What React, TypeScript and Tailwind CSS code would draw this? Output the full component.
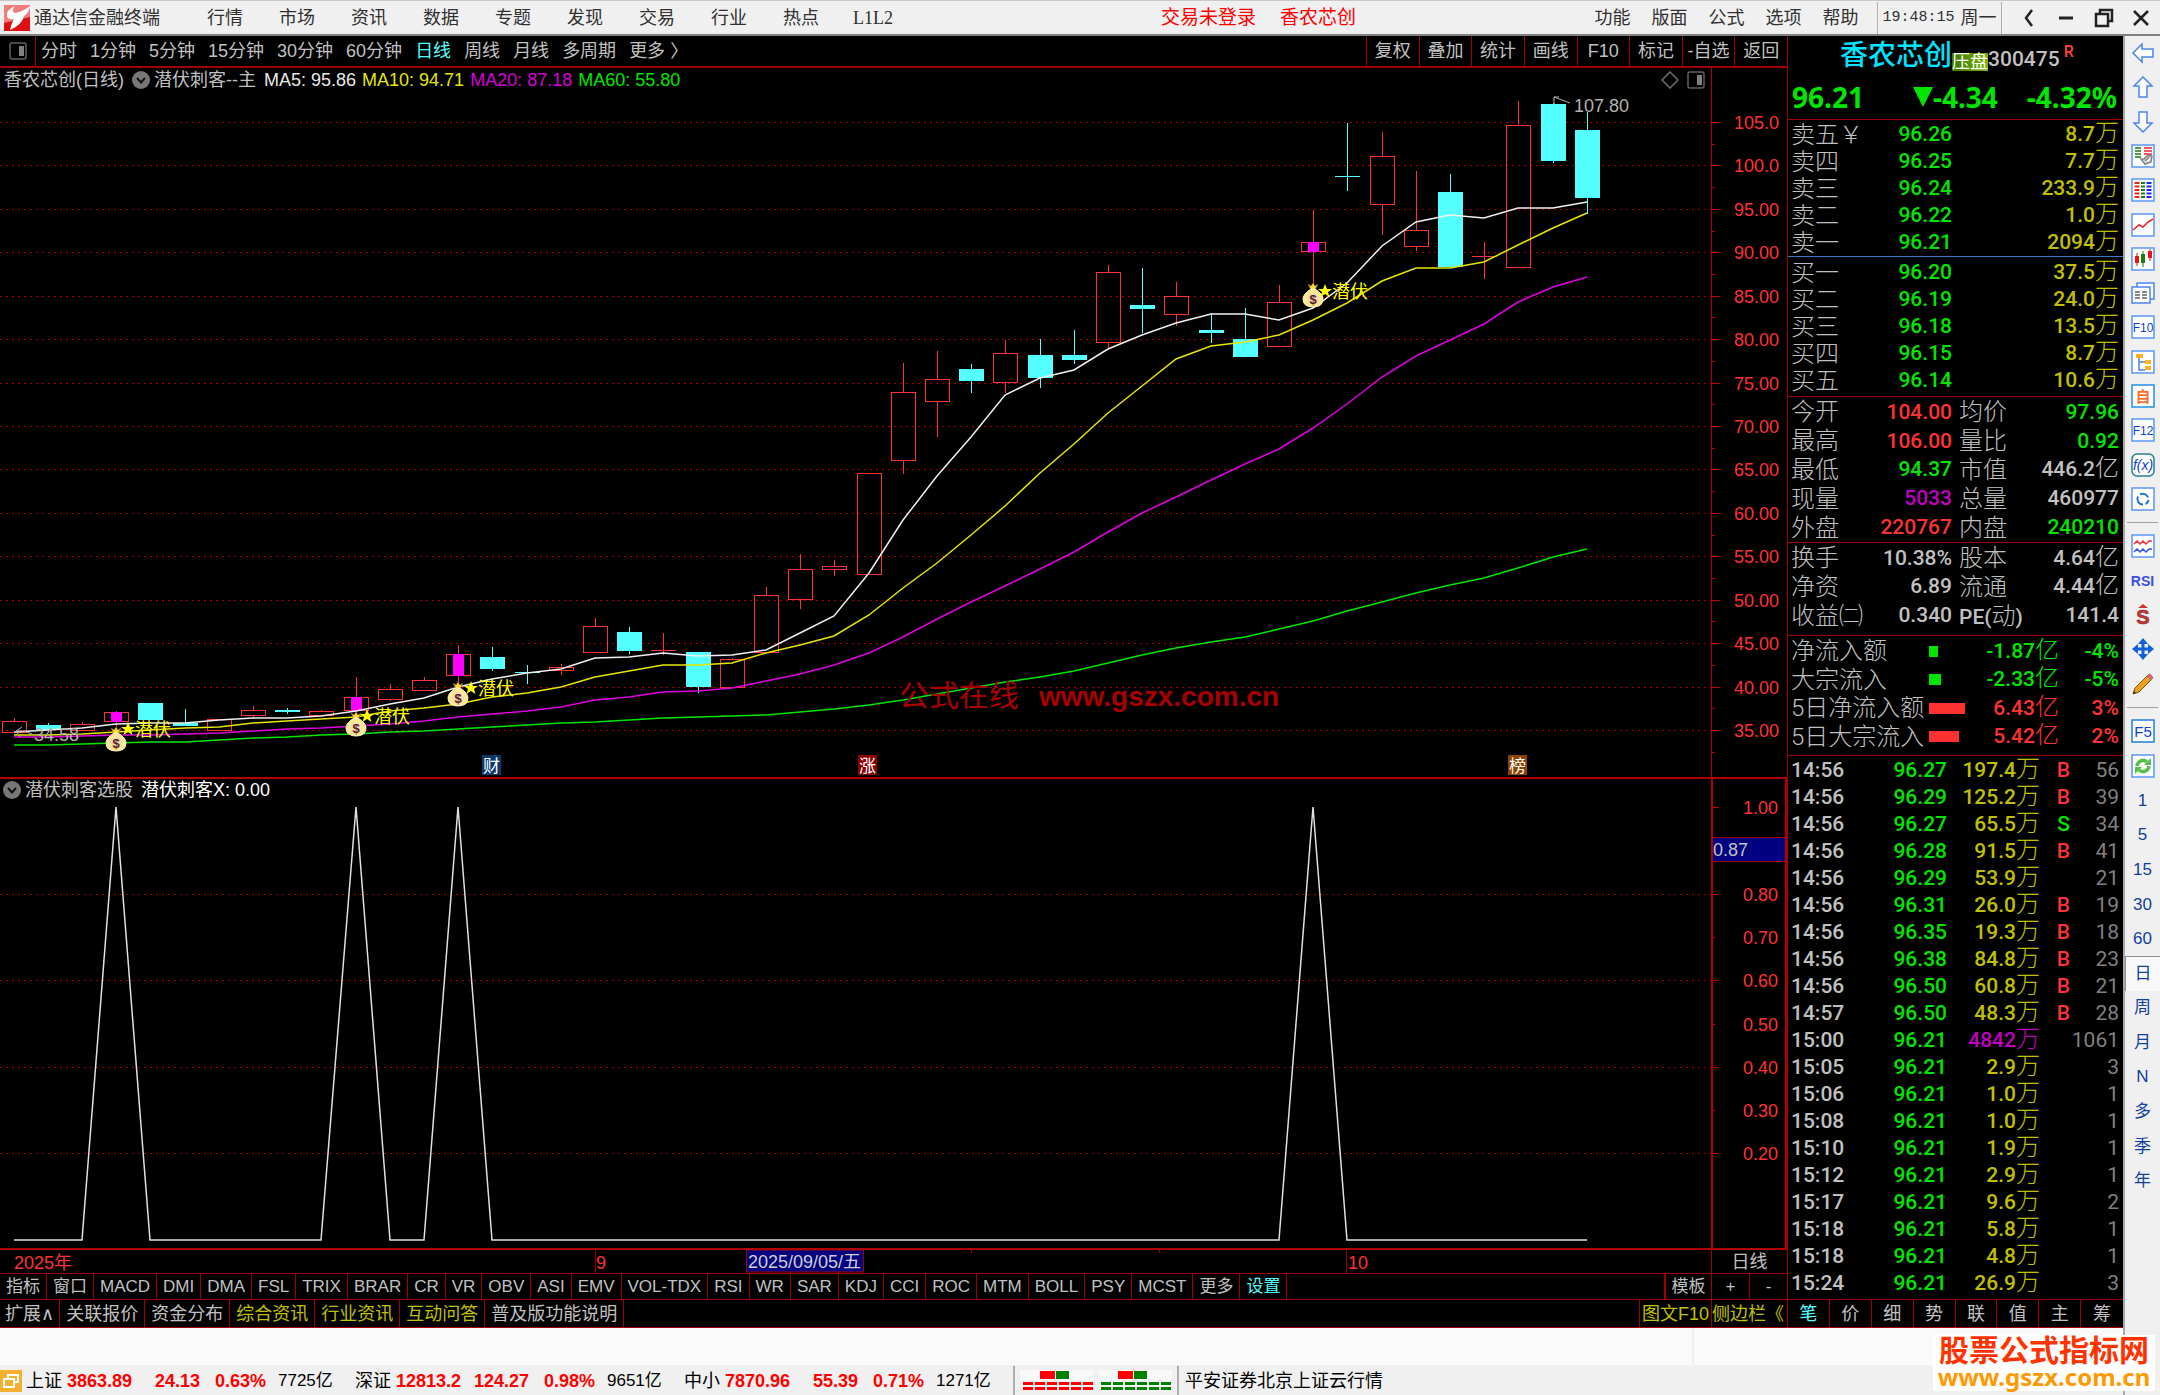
import React from "react";
import clsx from "clsx";

// ─── Data ────────────────────────────────────────────────────

const MENU = ["行情", "市场", "资讯", "数据", "专题", "发现", "交易", "行业", "热点", "L1L2"];
const MENU_RIGHT = ["功能", "版面", "公式", "选项", "帮助"];
const PERIODS = ["分时", "1分钟", "5分钟", "15分钟", "30分钟", "60分钟", "日线", "周线", "月线", "多周期", "更多 〉"];
const TOOLS = ["复权", "叠加", "统计", "画线", "F10", "标记", "-自选", "返回"];
const INDICATORS = [
  "指标", "窗口", "MACD", "DMI", "DMA", "FSL", "TRIX", "BRAR", "CR", "VR", "OBV", "ASI", "EMV", "VOL-TDX",
  "RSI", "WR", "SAR", "KDJ", "CCI", "ROC", "MTM", "BOLL", "PSY", "MCST", "更多", "设置",
];
const NEWS = ["扩展∧", "关联报价", "资金分布", "综合资讯", "行业资讯", "互动问答", "普及版功能说明"];
const QUOTE_TABS = ["笔", "价", "细", "势", "联", "值", "主", "筹"];

const SELL = [
  ["卖五￥", "96.26", "8.7万"],
  ["卖四", "96.25", "7.7万"],
  ["卖三", "96.24", "233.9万"],
  ["卖二", "96.22", "1.0万"],
  ["卖一", "96.21", "2094万"],
];
const BUY = [
  ["买一", "96.20", "37.5万"],
  ["买二", "96.19", "24.0万"],
  ["买三", "96.18", "13.5万"],
  ["买四", "96.15", "8.7万"],
  ["买五", "96.14", "10.6万"],
];

const RED = "text-[#ff3232]";
const GREEN = "text-[#00e600]";
const GREY = "text-[#c0c0c0]";
const PURPLE = "text-[#c000c0]";

const STATS = [
  ["今开", "104.00", RED, "均价", "97.96", GREEN],
  ["最高", "106.00", RED, "量比", "0.92", GREEN],
  ["最低", "94.37", GREEN, "市值", "446.2亿", GREY],
  ["现量", "5033", PURPLE, "总量", "460977", GREY],
  ["外盘", "220767", RED, "内盘", "240210", GREEN],
];
const BASICS = [
  ["换手", "10.38%", GREY, "股本", "4.64亿", GREY],
  ["净资", "6.89", GREY, "流通", "4.44亿", GREY],
  ["收益㈡", "0.340", GREY, "PE(动)", "141.4", GREY],
];
const FLOWS = [
  { label: "净流入额", bar: 9, value: "-1.87亿", pct: "-4%", up: false },
  { label: "大宗流入", bar: 12, value: "-2.33亿", pct: "-5%", up: false },
  { label: "5日净流入额", bar: 36, value: "6.43亿", pct: "3%", up: true },
  { label: "5日大宗流入", bar: 30, value: "5.42亿", pct: "2%", up: true },
];
const TICKS = [
  ["14:56", "96.27", "197.4万", "B", "56"],
  ["14:56", "96.29", "125.2万", "B", "39"],
  ["14:56", "96.27", "65.5万", "S", "34"],
  ["14:56", "96.28", "91.5万", "B", "41"],
  ["14:56", "96.29", "53.9万", "", "21"],
  ["14:56", "96.31", "26.0万", "B", "19"],
  ["14:56", "96.35", "19.3万", "B", "18"],
  ["14:56", "96.38", "84.8万", "B", "23"],
  ["14:56", "96.50", "60.8万", "B", "21"],
  ["14:57", "96.50", "48.3万", "B", "28"],
  ["15:00", "96.21", "4842万", "", "1061"],
  ["15:05", "96.21", "2.9万", "", "3"],
  ["15:06", "96.21", "1.0万", "", "1"],
  ["15:08", "96.21", "1.0万", "", "1"],
  ["15:10", "96.21", "1.9万", "", "1"],
  ["15:12", "96.21", "2.9万", "", "1"],
  ["15:17", "96.21", "9.6万", "", "2"],
  ["15:18", "96.21", "5.8万", "", "1"],
  ["15:18", "96.21", "4.8万", "", "1"],
  ["15:24", "96.21", "26.9万", "", "3"],
];

const INDEXES = [
  { name: "上证", last: "3863.89", chg: "24.13", pct: "0.63%", amt: "7725亿" },
  { name: "深证", last: "12813.2", chg: "124.27", pct: "0.98%", amt: "9651亿" },
  { name: "中小", last: "7870.96", chg: "55.39", pct: "0.71%", amt: "1271亿" },
];

// r = up (hollow red), c = down (cyan), m = up with signal; then high, top, bottom, low
type Candle = ["r" | "c" | "m", number, number, number, number];
const CANDLES: Candle[] = [
  ["r", 718, 721, 732, 732], ["c", 723, 725, 730, 730], ["r", 722, 724, 730, 730], ["m", 711, 712, 721, 727],
  ["c", 703, 703, 720, 720], ["c", 709, 723, 726, 726], ["r", 719, 719, 730, 730], ["r", 706, 710, 715, 719],
  ["c", 708, 710, 712, 714], ["r", 710, 711, 715, 717], ["m", 677, 697, 710, 713], ["r", 684, 689, 699, 701],
  ["r", 677, 680, 690, 690], ["m", 645, 654, 675, 683], ["c", 647, 657, 669, 671], ["c", 665, 672, 673, 684],
  ["r", 664, 667, 670, 675], ["r", 618, 626, 652, 652], ["c", 627, 632, 651, 654], ["r", 633, 650, 650, 655],
  ["c", 652, 652, 687, 693], ["r", 658, 659, 687, 687], ["r", 587, 595, 652, 652], ["r", 554, 569, 599, 609],
  ["r", 560, 566, 569, 576], ["r", 473, 473, 574, 574], ["r", 363, 392, 460, 474], ["r", 351, 379, 401, 437],
  ["c", 364, 369, 381, 393], ["r", 340, 353, 382, 393], ["c", 339, 355, 378, 388], ["c", 330, 355, 360, 364],
  ["r", 265, 272, 342, 349], ["c", 268, 305, 309, 333], ["r", 282, 296, 314, 326], ["c", 313, 330, 333, 343],
  ["c", 308, 339, 357, 357], ["r", 285, 302, 346, 346], ["m", 210, 242, 251, 285], ["c", 123, 176, 177, 191],
  ["r", 132, 156, 204, 235], ["r", 171, 230, 246, 251], ["c", 174, 192, 267, 267], ["r", 242, 256, 256, 279],
  ["r", 101, 125, 267, 267], ["c", 103, 104, 161, 163], ["c", 112, 130, 198, 214],
];

const MA5 = [
  732, 730, 728, 724, 723, 723, 720, 718, 718, 716, 711, 704, 698, 687, 679, 673, 669, 658, 657, 653, 656, 655, 650,
  633, 616, 573, 520, 476, 437, 395, 378, 370, 349, 335, 323, 314, 314, 320, 308, 283, 246, 222, 215, 218, 208, 208, 202,
];
const MA10 = [
  735, 735, 734, 732, 730, 728, 727, 723, 721, 719, 717, 711, 708, 704, 697, 693, 687, 677, 671, 665, 665, 663, 653,
  645, 636, 615, 588, 563, 535, 506, 473, 444, 413, 386, 359, 346, 342, 335, 320, 303, 281, 268, 268, 262, 245, 228, 213,
];
const MA20 = [
  737, 737, 736, 735, 735, 734, 733, 731, 729, 728, 726, 724, 721, 717, 714, 711, 707, 700, 697, 692, 691, 688, 681,
  674, 665, 653, 637, 619, 602, 586, 569, 552, 532, 513, 497, 480, 464, 449, 428, 404, 377, 356, 340, 324, 302, 287, 277,
];
const MA60 = [
  745, 745, 744, 743, 742, 742, 740, 738, 737, 735, 734, 732, 731, 729, 727, 725, 723, 722, 720, 718, 717, 716, 715,
  712, 709, 705, 700, 694, 688, 682, 677, 671, 663, 655, 648, 642, 637, 629, 621, 611, 602, 593, 585, 578, 568, 557, 549,
];

const SIGNALS = [
  { i: 3, y: 740, tx: 135, ty: 729 },
  { i: 10, y: 725, tx: 374, ty: 716 },
  { i: 13, y: 695, tx: 478, ty: 688 },
  { i: 38, y: 296, tx: 1332, ty: 291 },
];

const BADGES = [
  { text: "财", x: 482, fill: "#08386e" },
  { text: "涨", x: 858, fill: "#8c0000" },
  { text: "榜", x: 1508, fill: "#8a4300" },
];

// ─── Helpers ─────────────────────────────────────────────────

const candleX = (i: number) => Math.floor(14 + i * 34.2);
const priceY = (p: number) => Math.round(122 + (105 - p) * 8.686);
const subY = (v: number) => Math.round(1240 - v * 433);
const linePoints = (ys: number[]) => ys.map((y, i) => `${candleX(i)},${y}`).join(" ");

const PRICES = Array.from({ length: 15 }, (_, i) => 105 - i * 5);
const SUB_VALUES = [1, 0.8, 0.7, 0.6, 0.5, 0.4, 0.3, 0.2];

function FoldIcon() {
  return (
    <svg className="size-[18px] shrink-0" viewBox="0 0 18 18">
      <circle cx="9" cy="9" r="9" fill="#777" />
      <path d="M5 7l4 4.5L13 7" fill="none" stroke="#111" strokeWidth="2" />
    </svg>
  );
}

function PanelIcon() {
  return (
    <svg className="size-[18px]" viewBox="0 0 18 18">
      <rect x="1" y="1" width="16" height="16" rx="2" fill="none" stroke="#606060" strokeWidth="1.500" />
      <rect x="10" y="4" width="5" height="10" fill="#808080" />
    </svg>
  );
}

// ─── Charts ──────────────────────────────────────────────────

function MoneyBag({ x, y }: { x: number; y: number }) {
  return (
    <g transform={`translate(${x} ${y})`}>
      <path d="M-5 -12L-2 -10L0 -13L2 -10L5 -12L2 -6H-2Z" fill="#ffd83a" stroke="#8a6210" strokeWidth="0.6" />
      <path d="M-2 -7H2Q10 -2 10 3Q10 11 0 11Q-10 11 -10 3Q-10 -2 -2 -7Z" fill="#ffe98a" stroke="#fff6d0" />
      <circle cx="0" cy="3" r="6" fill="#f3dcc0" />
      <text x="0" y="8" textAnchor="middle" fontSize="13" fontWeight="700" fill="#5c1f10">
        $
      </text>
    </g>
  );
}

function CandleShape({ candle, x }: { candle: Candle; x: number }) {
  const [kind, high, top, bottom, low] = candle;
  if (kind === "c") {
    return (
      <g fill="#54ffff">
        <rect x={x - 12} y={top} width="25" height={Math.max(bottom - top, 1)} />
        <rect x={x} y={high} width="1" height={low - high} />
      </g>
    );
  }
  return (
    <g>
      <g fill="#ff3232">
        <rect x={x} y={high} width="1" height={top - high} />
        <rect x={x} y={bottom} width="1" height={low - bottom} />
        {top === bottom && <rect x={x - 12} y={top} width="25" height="1" />}
      </g>
      {top !== bottom && (
        <rect x={x - 12 + 0.5} y={top + 0.5} width="24" height={bottom - top} fill="none" stroke="#ff3232" />
      )}
      {kind === "m" && <rect x={x - 5} y={top} width="11" height={bottom - top + 1} fill="#ff00ff" />}
    </g>
  );
}

function MainChart() {
  return (
    <svg className="block w-full" viewBox="0 92 1711 685" fontFamily="'Liberation Sans','Noto Sans CJK SC',sans-serif" fontSize="18">
      {PRICES.map((p) => (
        <line key={p} x1="0" x2="1711" y1={priceY(p) + 0.5} y2={priceY(p) + 0.5} stroke="#a00000" strokeDasharray="2 4" />
      ))}
      <g shapeRendering="crispEdges">
        {CANDLES.map((c, i) => (
          <CandleShape key={i} candle={c} x={candleX(i)} />
        ))}
      </g>
      <g fill="none" strokeWidth="1.5">
        <polyline points={linePoints(MA60)} stroke="#00e600" />
        <polyline points={linePoints(MA20)} stroke="#e000e0" />
        <polyline points={linePoints(MA10)} stroke="#e6e600" />
        <polyline points={linePoints(MA5)} stroke="#f0f0f0" />
      </g>
      <g fill="#b0b0b0">
        <text x="34" y="741">34.58</text>
        <path d="M16 731h8M16 731l4 6M16 731l6-4M24 731l8 3" stroke="#b0b0b0" fill="none" />
        <text x="1574" y="112">107.80</text>
        <path d="M1554 104v-7h5M1554 97l16 6" stroke="#b0b0b0" fill="none" />
      </g>
      {SIGNALS.map((s) => (
        <g key={s.i}>
          <MoneyBag x={candleX(s.i)} y={s.y} />
          <path
            transform={`translate(${s.tx - 7} ${s.ty})`}
            d="M0 -7L2 -2H7L3 1L4.500 6L0 3L-4.500 6L-3 1L-7 -2H-2Z"
            fill="#ffff00"
          />
          <text x={s.tx} y={s.ty + 7} fill="#ffff00">
            潜伏
          </text>
        </g>
      ))}
      {BADGES.map((b) => (
        <g key={b.text}>
          <rect x={b.x} y="755" width="19" height="20" fill={b.fill} />
          <text x={b.x + 1} y="772" fontSize="17" fill="#fff">
            {b.text}
          </text>
        </g>
      ))}
      <g fill="#a80000">
        <text x="899" y="706" fontSize="30">
          公式在线
        </text>
        <text x="1039" y="706" fontSize="28" fontWeight="700">
          www.gszx.com.cn
        </text>
      </g>
    </svg>
  );
}

function PriceAxis() {
  return (
    <svg className="block w-full" viewBox="0 68 75 709" fontFamily="'Liberation Sans',sans-serif" fontSize="18">
      {PRICES.map((p) => (
        <g key={p}>
          <path d={`M0 ${priceY(p) + 0.5}h8M0 ${priceY(p - 2.5) + 0.5}h3`} stroke="#c00000" />
          <text x="67" y={priceY(p) + 7} textAnchor="end" fill="#ff3232">
            {p >= 100 ? p.toFixed(1) : p.toFixed(2)}
          </text>
        </g>
      ))}
    </svg>
  );
}

function SubChart() {
  const peaks = SIGNALS.map((s) => s.i);
  const points = CANDLES.map((_, i) => `${candleX(i)},${subY(peaks.includes(i) ? 1 : 0)}`).join(" ");
  return (
    <svg className="block w-full" viewBox="0 801 1711 447">
      {[0.8, 0.6, 0.4, 0.2].map((v) => (
        <line key={v} x1="0" x2="1711" y1={subY(v) + 0.5} y2={subY(v) + 0.5} stroke="#a00000" strokeDasharray="2 4" />
      ))}
      <polyline points={points} fill="none" stroke="#e0e0e0" strokeWidth="1.5" />
    </svg>
  );
}

function SubAxis() {
  return (
    <svg className="block w-full" viewBox="0 779 72 468" fontFamily="'Liberation Sans',sans-serif" fontSize="18">
      {SUB_VALUES.map((v) => (
        <g key={v}>
          <path d={`M0 ${subY(v) + 0.5}h${Math.round(v * 10) % 2 ? 2 : 6}`} stroke="#c00000" />
          <text x="65" y={subY(v) + 7} textAnchor="end" fill="#ff3232">
            {v.toFixed(2)}
          </text>
        </g>
      ))}
      <rect x="-2" y="837.5" width="76" height="24" fill="#000080" stroke="#a00000" />
      <text x="0" y="856" fill="#c0c0c0">
        0.87
      </text>
    </svg>
  );
}

function DateAxis() {
  return (
    <svg className="block w-full" viewBox="0 1250 1711 23" fontFamily="'Liberation Sans','Noto Sans CJK SC',sans-serif" fontSize="18">
      <path d="M595.500 1250v23M1346.500 1250v23M971.500 1250v3M1159.500 1250v3" stroke="#a00000" />
      <g fill="#ff3232">
        <text x="14" y="1269">2025年</text>
        <text x="596" y="1269">9</text>
        <text x="1348" y="1269">10</text>
      </g>
      <rect x="746.500" y="1250" width="117" height="22" fill="#000080" stroke="#a00000" />
      <text x="748" y="1268" fill="#d0d0d0">
        2025/09/05/五
      </text>
    </svg>
  );
}

// ─── Quote panel ─────────────────────────────────────────────

/** Number followed by an optional 万 / 亿 unit in the larger thin face */
function Num({ value }: { value: string }) {
  const m = value.match(/^(.*?)([万亿]?)$/)!;
  return (
    <>
      {m[1]}
      {m[2] && <span className="text-2xl leading-[0] font-light">{m[2]}</span>}
    </>
  );
}

function BookTable({ rows, label }: { rows: string[][]; label: string }) {
  return (
    <table aria-label={label} className="h-[135px] w-full table-fixed leading-none">
      <tbody>
        {rows.map(([name, price, vol]) => (
          <tr key={name}>
            <th className="w-[84px] p-0 text-left text-2xl leading-none font-light whitespace-nowrap">{name}</th>
            <td className="w-[77px] p-0 text-right text-[#00e600]">{price}</td>
            <td className="p-0 text-right text-[#c0c000]">
              <Num value={vol} />
            </td>
          </tr>
        ))}
      </tbody>
    </table>
  );
}

function StatTable({ rows, label, className }: { rows: string[][]; label: string; className: string }) {
  return (
    <table aria-label={label} className={clsx("w-full table-fixed leading-none whitespace-nowrap", className)}>
      <tbody>
        {rows.map(([a, av, ac, b, bv, bc]) => (
          <tr key={a}>
            <th className="w-[72px] p-0 text-left text-2xl leading-none font-light">{a}</th>
            <td className={clsx("w-[89px] p-0 text-right", ac)}>{av}</td>
            <th className="w-[72px] p-0 pl-[7px] text-left text-2xl leading-none font-light">
              {b === "PE(动)" ? (
                <>
                  <span className="text-[21px] font-medium">PE(</span>动<span className="text-[21px] font-medium">)</span>
                </>
              ) : (
                b
              )}
            </th>
            <td className={clsx("p-0 text-right", bc)}>
              <Num value={bv} />
            </td>
          </tr>
        ))}
      </tbody>
    </table>
  );
}

function QuotePanel() {
  return (
    <aside className="flex w-[336px] shrink-0 flex-col border-l border-[#a00000] font-[Roboto,'Noto_Sans_CJK_SC',sans-serif] text-[21px] leading-none font-medium text-[#c0c0c0]">
      <div className="flex h-[84px] flex-col border-b border-[#a00000]">
        <div className="flex h-10 items-center pl-[52px]">
          <h1 className="text-[28px] font-medium text-[#00e5ff]">香农芯创</h1>
          <span className="mt-3 bg-linear-to-r from-[#3c7800] to-[#78b400] text-lg leading-[18px] font-normal text-white">压盘</span>
          <span className="mt-2">300475</span>
          <span className="mb-2 pl-1 text-base text-[#ff4040]">R</span>
        </div>
        <div className="flex h-11 items-center justify-between pr-1.5 pl-1 font-['Noto_Sans',sans-serif] text-[28px] font-bold text-[#00e600]">
          <span>96.21</span>
          <span className="flex items-center pl-5">
            <svg className="h-5 w-5" viewBox="0 0 20 20">
              <path d="M0 0H20L10 20Z" fill="#00e600" />
            </svg>
            -4.34
          </span>
          <span>-4.32%</span>
        </div>
      </div>

      <div className="border-b border-[#3878c8] pt-px pr-1 pl-[3px]">
        <BookTable rows={SELL} label="卖盘" />
      </div>
      <div className="border-b border-[#a00000] pt-0.5 pr-1 pb-0.5 pl-[3px]">
        <BookTable rows={BUY} label="买盘" />
      </div>
      <div className="border-b border-[#a00000] pt-px pr-1 pl-[3px]">
        <StatTable rows={STATS} label="行情" className="h-[144px]" />
      </div>
      <div className="border-b border-[#a00000] pt-px pr-1 pb-[5px] pl-[3px]">
        <StatTable rows={BASICS} label="基本面" className="h-[86px]" />
      </div>
      <div className="border-b border-[#a00000] pt-px pr-1 pb-1 pl-[3px]">
        <table aria-label="资金流向" className="h-[114px] w-full table-fixed leading-none whitespace-nowrap">
          <tbody>
            {FLOWS.map((f) => (
              <tr key={f.label} className={f.up ? "text-[#ff3232]" : "text-[#00e600]"}>
                <th className="w-[138px] p-0 text-left text-2xl leading-none font-light text-[#c0c0c0]">{f.label}</th>
                <td className="w-[42px] p-0">
                  <div className="h-[11px] bg-current" style={{ width: f.bar }} />
                </td>
                <td className="w-[88px] p-0 text-right">
                  <Num value={f.value} />
                </td>
                <td className="p-0 text-right">{f.pct}</td>
              </tr>
            ))}
          </tbody>
        </table>
      </div>
      <div className="flex-1 pt-px pr-1 pb-0.5 pl-[3px]">
        <table aria-label="分笔成交" className="h-[540px] w-full table-fixed leading-none whitespace-nowrap">
          <tbody>
            {TICKS.map(([time, price, vol, side, n], i) => (
              <tr key={i}>
                <td className="w-[70px] p-0">{time}</td>
                <td className="w-[86px] p-0 text-right text-[#00e600]">{price}</td>
                <td className={clsx("w-[93px] p-0 text-right", vol === "4842万" ? "text-[#c000c0]" : "text-[#c0c000]")}>
                  <Num value={vol} />
                </td>
                <td className={clsx("w-[30px] p-0 text-right", side === "S" ? GREEN : RED)}>{side}</td>
                <td className="p-0 text-right font-normal text-[#808080]">{n}</td>
              </tr>
            ))}
          </tbody>
        </table>
      </div>
      <div className="grid h-[29px] grid-cols-8 border-y border-[#a00000] text-lg font-normal">
        {QUOTE_TABS.map((t) => (
          <button key={t} className={clsx("border-[#a00000] not-last:border-r", t === "笔" && "text-[#54ffff]")}>
            {t}
          </button>
        ))}
      </div>
    </aside>
  );
}

// ─── Right icon bar ──────────────────────────────────────────

function Icon({ children, box = "#5b96f5" }: { children: React.ReactNode; box?: string }) {
  return (
    <svg className="size-6" viewBox="0 0 24 24" fontFamily="'Liberation Sans','Noto Sans CJK SC',sans-serif">
      {box !== "none" && <rect x="1" y="1" width="22" height="22" fill="#fff" stroke={box} strokeWidth="1.500" />}
      {children}
    </svg>
  );
}

const ARROW = "M2 12L11 3V8H22V16H11V21Z";

const GROUP_ONE: [string, React.ReactNode][] = [
  ["后退", <Icon box="none"><path d={ARROW} fill="#fff" stroke="#4b84e8" strokeWidth="1.500" /></Icon>],
  ["上翻", <Icon box="none"><path d={ARROW} transform="rotate(90 12 12)" fill="#fff" stroke="#4b84e8" strokeWidth="1.500" /></Icon>],
  ["下翻", <Icon box="none"><path d={ARROW} transform="rotate(-90 12 12)" fill="#fff" stroke="#4b84e8" strokeWidth="1.500" /></Icon>],
  ["报价", (
    <Icon>
      <path d="M4 4h6M4 7h6M4 10h6M4 13h6" stroke="#108010" strokeWidth="1.500" />
      <path d="M13 4h8M13 7h8M13 10h8" stroke="#f02020" strokeWidth="1.500" />
      <path d="M10 15l4 5 6-2 1-6-4-1-4 4zM14 17l5-5" fill="#e8e8e8" stroke="#808080" strokeWidth="1.500" />
    </Icon>
  )],
  ["列表", (
    <Icon>
      <path d="M6 4v16" stroke="#f02020" strokeWidth="5" strokeDasharray="2 1.500" />
      <path d="M12 4v16" stroke="#108010" strokeWidth="4" strokeDasharray="2 1.500" />
      <path d="M18 4v16" stroke="#2020f0" strokeWidth="5" strokeDasharray="2 1.500" />
    </Icon>
  )],
  ["分时图", <Icon><path d="M2 17L8 12L12 14L17 9L22 6" fill="none" stroke="#f02020" strokeWidth="1.500" /></Icon>],
  ["K线图", (
    <Icon>
      <path d="M6 6v13M19 2v12" stroke="#e01010" /><path d="M12 4v16" stroke="#108010" />
      <rect x="4" y="9" width="4" height="7" fill="#f01010" /><rect x="17" y="4" width="4" height="7" fill="#f01010" />
      <rect x="10" y="7" width="4" height="9" fill="#108010" />
    </Icon>
  )],
  ["多窗口", (
    <Icon box="none">
      <path d="M6 6V2H23V18H19" fill="#fff" stroke="#4b84e8" strokeWidth="1.500" />
      <rect x="1" y="6" width="18" height="16" fill="#fff" stroke="#4b84e8" strokeWidth="1.500" />
      <path d="M4 11h5M11 11h5M4 14h5M11 14h5M4 17h5M11 17h5" stroke="#606060" strokeWidth="1.500" />
    </Icon>
  )],
  ["F10", <Icon><text x="12" y="17" textAnchor="middle" fontSize="12" fill="#1040d0">F10</text></Icon>],
  ["板块", (
    <Icon>
      <path d="M8 7v13h6M8 12h6" fill="none" stroke="#4b84e8" strokeWidth="1.500" />
      <rect x="5" y="4" width="7" height="4" fill="#ffb020" /><rect x="14" y="10" width="6" height="4" fill="#ffb020" /><rect x="14" y="16" width="6" height="4" fill="#ffb020" />
    </Icon>
  )],
  ["自选", <Icon box="#1e90e8"><text x="12" y="18" textAnchor="middle" fontSize="15" fontWeight="700" fill="#ff7030">自</text></Icon>],
  ["F12", <Icon><text x="12" y="17" textAnchor="middle" fontSize="12" fill="#1040d0">F12</text></Icon>],
  ["公式", (
    <Icon box="none">
      <rect x="1" y="1" width="22" height="22" rx="5" fill="#fff" stroke="#208090" strokeWidth="1.500" />
      <text x="12" y="17" textAnchor="middle" fontSize="14" fontStyle="italic" fill="#1040d0">f(x)</text>
    </Icon>
  )],
  ["周期", (
    <Icon>
      <path d="M9 7.500a5.500 5.500 0 0 1 8 3M17.500 13a5.500 5.500 0 0 1-3 4M12 17.500a5.500 5.500 0 0 1-5-8" fill="none" stroke="#2070e0" strokeWidth="2" />
    </Icon>
  )],
];

const GROUP_TWO: [string, React.ReactNode][] = [
  ["叠加线", (
    <Icon>
      <path d="M3 10l3-3 3 3 3-3 3 3 3-3 3 0" fill="none" stroke="#f03030" strokeWidth="1.500" />
      <path d="M3 18l3-3 3 3 3-3 3 3 3-3 3 0" fill="none" stroke="#3050f0" strokeWidth="1.500" />
    </Icon>
  )],
  ["RSI", <span className="text-sm font-bold text-[#3850e0]">RSI</span>],
  ["资金", (
    <Icon box="none">
      <path d="M12 1l5 4H7z" fill="#d03030" />
      <text x="12" y="21" textAnchor="middle" fontSize="20" fontWeight="700" fill="#d03030" stroke="#803030" strokeWidth="0.6">S</text>
    </Icon>
  )],
  ["移动", (
    <Icon box="none">
      <path d="M12 1l5 6H7zM12 23l5-6H7zM1 12l6-5v10zM23 12l-6-5v10z" fill="#1060d8" />
      <path d="M12 7v10M7 12h10" stroke="#1060d8" strokeWidth="3" />
    </Icon>
  )],
  ["画笔", (
    <Icon box="none">
      <path d="M2 22L4 16L16 4L20 8L8 20Z" fill="#f0a020" stroke="#80500c" />
      <path d="M16 4l2-2q2 0 4 4l-2 2z" fill="#f06070" stroke="#a07070" />
      <path d="M2 22l1-3 2 2z" fill="#303030" />
    </Icon>
  )],
];

const GROUP_THREE: [string, React.ReactNode][] = [
  ["F5", <Icon box="#1e80d8"><text x="12" y="18" textAnchor="middle" fontSize="15" fill="#1040d0">F5</text></Icon>],
  ["刷新", (
    <Icon>
      <path d="M6 12a6 6 0 0 1 10-4M18 12a6 6 0 0 1-10 4" fill="none" stroke="#58c048" strokeWidth="3.500" />
      <path d="M13 11h7V4zM11 13H4v7z" fill="#58c048" />
    </Icon>
  )],
  ...["1", "5", "15", "30", "60", "日", "周", "月", "N", "多", "季", "年"].map(
    (t): [string, React.ReactNode] => [t, t]
  ),
];

function IconGroup({ items, className }: { items: [string, React.ReactNode][]; className: string }) {
  return (
    <div className={clsx("grid auto-rows-fr", className)}>
      {items.map(([name, node]) => (
        <button
          key={name}
          aria-label={name}
          className={clsx(
            "flex items-center justify-center",
            name === "日" && "border-t border-l border-[#909090] bg-[#f8f8f8]"
          )}
        >
          {node}
        </button>
      ))}
    </div>
  );
}

function IconBar() {
  return (
    <nav className="w-[37px] shrink-0 border-l-2 border-[#a8a8a8] bg-[#f0f0f0] font-['Liberation_Sans','Noto_Sans_CJK_SC',sans-serif] text-[17px] leading-none text-[#10409c]">
      <IconGroup items={GROUP_ONE} className="h-[480px]" />
      <hr className="mx-0.5 my-1.5 border-[#a0a0a0]" />
      <IconGroup items={GROUP_TWO} className="h-[172px]" />
      <hr className="mx-0.5 my-1.5 border-[#a0a0a0]" />
      <IconGroup items={GROUP_THREE} className="h-[484px]" />
    </nav>
  );
}

// ─── Bars ────────────────────────────────────────────────────

function TopBar() {
  return (
    <header className="flex h-9 items-center border-t border-b-2 border-t-[#c8c8c8] border-b-[#808080] bg-[#f0f0f0] text-lg leading-6 text-[#303030]">
      <svg className="ml-1 h-[26px] w-[26px]" viewBox="0 0 26 26">
        <rect width="26" height="26" fill="#dc1010" />
        <path d="M0 0H26V12L0 18Z" fill="#f07c7c" />
        <path d="M11 1Q2 5 3 11Q4 15 10 14Q7 19 6 25Q18 20 20 11Q25 8 26 1Q20 6 12 8Q8 8 9 5Q9 3 11 1Z" fill="#fff" />
      </svg>
      <span className="ml-1 w-[155px]">通达信金融终端</span>
      {MENU.map((m) => (
        <button key={m} className={clsx("w-[72px]", m === "L1L2" && "font-['Liberation_Serif',serif]")}>
          {m}
        </button>
      ))}
      <div className="flex flex-1 justify-center gap-6 pl-6 text-[19px] text-[#ff0000]">
        <button>交易未登录</button>
        <button>香农芯创</button>
      </div>
      <div className="flex w-[576px] items-center">
        {MENU_RIGHT.map((m) => (
          <button key={m} className="w-[57px]">
            {m}
          </button>
        ))}
        <time className="ml-2 flex h-8 w-[125px] items-center justify-center gap-1.5 border-x border-[#b0b0b0] whitespace-nowrap">
          <span className="font-['Liberation_Mono',monospace] text-[15px]">19:48:15</span>
          <span>周一</span>
        </time>
        <div className="flex flex-1 items-center justify-around pl-2">
          <button aria-label="收起">
            <svg className="size-5" viewBox="0 0 20 20"><path d="M13 2L7 10L13 18" fill="none" stroke="#222" strokeWidth="2.500" /></svg>
          </button>
          <button aria-label="最小化">
            <svg className="size-5" viewBox="0 0 20 20"><path d="M3 10H17" stroke="#222" strokeWidth="3" /></svg>
          </button>
          <button aria-label="还原">
            <svg className="size-5" viewBox="0 0 20 20"><path d="M6 6V2H18V13H14M2 6H14V18H2Z" fill="none" stroke="#222" strokeWidth="2.500" /></svg>
          </button>
          <button aria-label="关闭">
            <svg className="size-5" viewBox="0 0 20 20"><path d="M3 3L17 17M17 3L3 17" stroke="#222" strokeWidth="2.500" /></svg>
          </button>
        </div>
      </div>
    </header>
  );
}

function Toolbar() {
  return (
    <div className="flex h-8 items-stretch border-b-2 border-[#a00000]">
      <button aria-label="侧栏" className="flex w-9 items-center justify-center border-r border-[#a00000]">
        <PanelIcon />
      </button>
      <div className="flex flex-1 items-center gap-[13px] pl-[5px]">
        {PERIODS.map((p) => (
          <button key={p} className={clsx("whitespace-nowrap", p === "日线" && "text-[#54ffff]")}>
            {p}
          </button>
        ))}
      </div>
      <div className="grid w-[421px] grid-cols-8">
        {TOOLS.map((t) => (
          <button key={t} className="border-l border-[#a00000] whitespace-nowrap">
            {t}
          </button>
        ))}
      </div>
    </div>
  );
}

function Leds({ color }: { color: string }) {
  return (
    <svg className="h-[22px] w-[74px]" viewBox="0 0 74 22">
      <rect x="0" y="0" width="74" height="10" fill="#f8f8f8" />
      <rect x="20" y="1" width="15" height="8" fill="#ff0000" />
      <rect x="36" y="1" width="13" height="8" fill="#008000" />
      <path d="M3 13.500H73M3 18.500H73" stroke={color} strokeWidth="3" strokeDasharray="10 2" />
    </svg>
  );
}

function StatusBar() {
  return (
    <footer className="flex h-[31px] items-center bg-[#f0f0f0] text-[17px] leading-6 text-black">
      <button aria-label="窗口" className="mr-1 h-[22px] w-[22px]">
        <svg viewBox="0 0 22 22">
          <rect width="22" height="22" fill="#f5b030" />
          <path d="M8 9V5H18V12H14M4 9H14V17H4Z" fill="none" stroke="#fff" strokeWidth="2" />
        </svg>
      </button>
      {INDEXES.map((x) => (
        <div key={x.name} className="flex w-[329px] items-center">
          <span className="w-[41px] text-lg">{x.name}</span>
          <b className="w-[69px] text-lg text-[#ff0000]">{x.last}</b>
          <b className="w-[64px] text-right text-lg text-[#ff0000]">{x.chg}</b>
          <b className="w-[66px] text-right text-lg text-[#ff0000]">{x.pct}</b>
          <span className="pl-3">{x.amt}</span>
        </div>
      ))}
      <div className="flex h-[29px] items-center gap-1 border-x-2 border-[#b0b0b0] px-[5px]">
        <Leds color="#ff0000" />
        <Leds color="#008000" />
      </div>
      <span className="pl-1.5 text-lg leading-6">平安证券北京上证云行情</span>
    </footer>
  );
}

// ─── Page ────────────────────────────────────────────────────

export default function App() {
  return (
    <div className="relative border-b border-[#1c2838] bg-black font-['Liberation_Sans','Noto_Sans_CJK_SC',sans-serif] leading-none">
      <TopBar />
      <div className="flex">
        <div className="min-w-0 flex-1">
          <div className="flex">
            <main className="flex min-w-0 flex-1 flex-col text-lg leading-none text-[#c0c0c0]">
              <Toolbar />

              {/* Price chart */}
              <section className="flex">
                <div className="min-w-0 flex-1">
                  <div className="flex h-6 items-center gap-2 pr-1.5 pl-1">
                    <span>香农芯创(日线)</span>
                    <FoldIcon />
                    <span className="-ml-1">潜伏刺客--主</span>
                    <div className="flex flex-1 gap-1.5">
                      <span className="text-[#e8e8e8]">MA5: 95.86</span>
                      <span className="text-[#e6e600]">MA10: 94.71</span>
                      <span className="text-[#d800d8]">MA20: 87.18</span>
                      <span className="text-[#00e600]">MA60: 55.80</span>
                    </div>
                    <svg className="size-[18px]" viewBox="0 0 18 18">
                      <path d="M9 1L17 9L9 17L1 9Z" fill="none" stroke="#707070" strokeWidth="1.500" />
                    </svg>
                    <PanelIcon />
                  </div>
                  <MainChart />
                </div>
                <div className="w-[76px] border-l border-[#b00000]">
                  <PriceAxis />
                </div>
              </section>

              {/* Signal chart */}
              <section className="flex border-y-2 border-[#b00000]">
                <div className="min-w-0 flex-1">
                  <div className="flex h-[22px] items-center gap-1 pl-[3px]">
                    <FoldIcon />
                    <span>潜伏刺客选股</span>
                    <span className="pl-1 text-white">潜伏刺客X: 0.00</span>
                  </div>
                  <SubChart />
                </div>
                <div className="w-[76px] border-x-2 border-[#b00000]">
                  <SubAxis />
                </div>
              </section>

              <div className="flex border-b border-[#a00000]">
                <div className="min-w-0 flex-1">
                  <DateAxis />
                </div>
                <button className="w-[76px] border-l border-[#a00000]">日线</button>
              </div>

              <div className="flex h-[26px] border-b border-[#a00000] text-[17px]">
                {INDICATORS.map((t) => (
                  <button key={t} className={clsx("border-r border-[#a00000] px-1.5", t === "设置" && "text-[#54ffff]")}>
                    {t}
                  </button>
                ))}
                <button className="ml-auto w-[47px] border-l-2 border-[#a00000]">模板</button>
                <button className="w-[38px] border-l border-[#a00000]">+</button>
                <button className="w-[38px] border-l border-[#a00000]">-</button>
              </div>

              <div className="flex flex-1 border-b border-[#a00000]">
                {NEWS.map((t, i) => (
                  <button
                    key={t}
                    className={clsx(
                      "border-r border-[#a00000] whitespace-nowrap",
                      i === 0 ? "px-[5px] font-['Liberation_Sans','DejaVu_Sans','Noto_Sans_CJK_SC',sans-serif]" : "px-1.5",
                      i > 2 && i < 6 && "text-[#c0c000]"
                    )}
                  >
                    {t}
                  </button>
                ))}
                <button className="ml-auto w-[72px] border-l border-[#a00000] text-[#c0c000]">图文F10</button>
                <button className="w-[76px] border-l border-[#a00000] text-left whitespace-nowrap text-[#c0c000]">侧边栏《</button>
              </div>
            </main>
            <QuotePanel />
          </div>

          <div className="flex h-[37px] bg-[#fafafa]">
            <div className="flex-1 border-r-2 border-[#f0f0f0]" />
            <div className="w-[429px]" />
          </div>
          <StatusBar />
        </div>
        <IconBar />
      </div>

      <a
        href="#home"
        className="absolute right-[5px] bottom-[5px] flex h-14 w-[222px] flex-col items-center bg-white font-['Noto_Sans','Noto_Sans_CJK_SC',sans-serif] font-bold"
      >
        <span className="text-[30px] leading-[30px] text-[#ff3300]">股票公式指标网</span>
        <span className="text-2xl leading-6 text-[#ff9900]">www.gszx.com.cn</span>
      </a>
    </div>
  );
}
